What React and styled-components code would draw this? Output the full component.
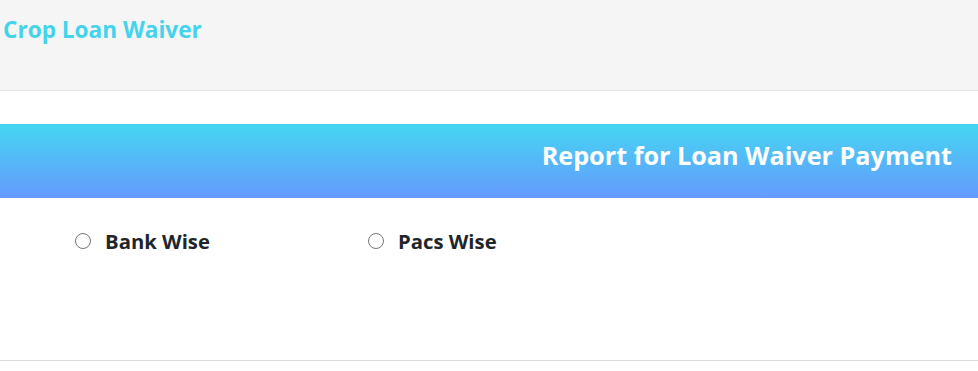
import React from 'react';
import styled, { createGlobalStyle } from 'styled-components';

const GlobalStyle = createGlobalStyle`
  body {
    margin: 0;
    background: #ffffff;
    font-family: "Open Sans", "Noto Sans", sans-serif;
  }
`;

const Header = styled.header`
  height: 91px;
  background-color: #f5f5f5;
  border-bottom: 1px solid #e4e4e4;
  box-sizing: border-box;
  padding: 14px 3px 0;
`;

const Brand = styled.h1`
  margin: 0;
  font-size: 22.6px;
  font-weight: 700;
  color: #45d3ec;
`;

const Banner = styled.div`
  margin-top: 33px;
  height: 74px;
  background: linear-gradient(to bottom, #45d6f2, #659afd);
  display: flex;
  align-items: center;
  justify-content: flex-end;
  padding-right: 26px;
`;

const BannerTitle = styled.h2`
  margin: 0 0 12px;
  color: #ffffff;
  font-size: 25.2px;
  font-weight: 700;
`;

const OptionsRow = styled.div`
  display: flex;
  align-items: flex-start;
  padding: 29px 0 0 75px;
  height: 163px;
  box-sizing: border-box;
  border-bottom: 1px solid #dcdcdc;
`;

const Option = styled.label`
  display: flex;
  align-items: center;
  width: 293px;
  font-size: 20.3px;
  font-weight: 700;
  color: #212529;
  cursor: pointer;
`;

const Radio = styled.input.attrs({ type: 'radio' })`
  margin: 0 14px 0 0;
  width: 16px;
  height: 16px;
`;

const App = () => {
  return (
    <>
      <GlobalStyle />
      <Header>
        <Brand>Crop Loan Waiver</Brand>
      </Header>
      <Banner>
        <BannerTitle>Report for Loan Waiver Payment</BannerTitle>
      </Banner>
      <OptionsRow>
        <Option>
          <Radio name="reportType" value="bank" />
          Bank Wise
        </Option>
        <Option>
          <Radio name="reportType" value="pacs" />
          Pacs Wise
        </Option>
      </OptionsRow>
    </>
  );
};

export default App;
